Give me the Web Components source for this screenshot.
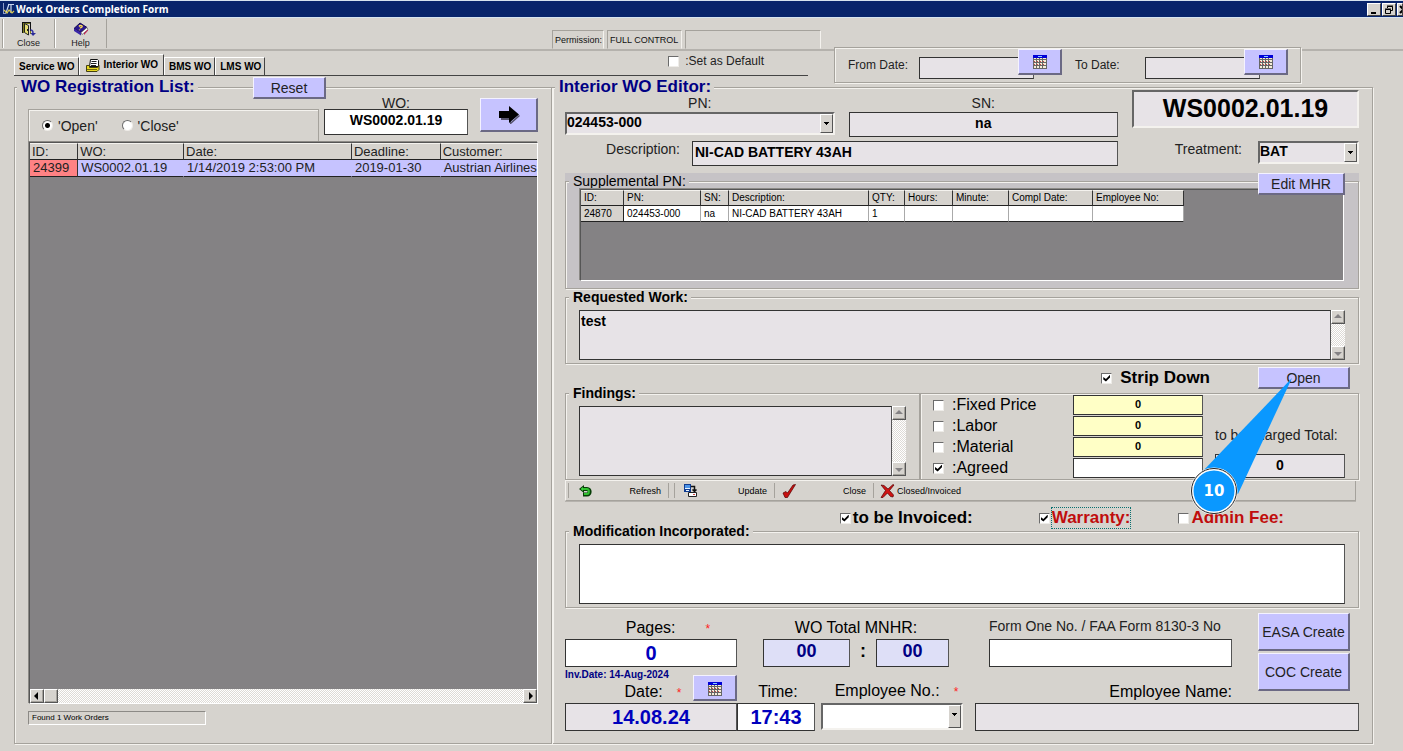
<!DOCTYPE html>
<html lang="en">
<head>
<meta charset="utf-8">
<title>Work Orders Completion Form</title>
<style>
  html, body { margin: 0; background: #d6d3ce; }
  body { font-family: "Liberation Sans", Arial, sans-serif; font-size: 14px; color: #222; }
</style>
</head>
<body>
<wo-app></wo-app>
<script>
const base = `
  *, *::before, *::after { box-sizing: border-box; }
  :host { display: block; min-width: 0; }
  button, input, select, textarea { font: inherit; color: inherit; margin: 0; border-radius: 0; outline: 0; min-width: 0; }
  button { padding: 0; }
  .face { background: #c6c3ff; border: solid; border-width: 1px 2px 2px 1px; border-color: #f4f2ff #6b6984 #6b6984 #f4f2ff; color: #222; line-height: 16px; }
  .field { display: block; width: 100%; border: 1px solid #333; border-right-color: #555; background: #e7e3e7; color: #000; padding: 0 2px; font-weight: bold; text-align: center; }
  .left { text-align: left; }
  .white { background: #fff; }
  .area { resize: none; overflow: hidden; text-align: left; line-height: 18px; padding: 1px; }
  .combo { display: block; position: relative; background: #e7e3e7; border: 2px solid; border-color: #666 #f4f2ee #f4f2ee #666; }
  .combo select { display: block; appearance: none; width: 100%; height: 19px; border: 0; background: none; color: #000; font-weight: bold; padding: 0 0 3px; }
  .combo::after { content: ""; position: absolute; right: 0; top: 0; bottom: 0; width: 13px; pointer-events: none; border: 1px solid; border-color: #fff #555 #555 #fff;
    background: linear-gradient(#000 0 0) 3px 7px / 5px 1px no-repeat, linear-gradient(#000 0 0) 4px 8px / 3px 1px no-repeat, linear-gradient(#000 0 0) 5px 9px / 1px 1px no-repeat, #d6d3ce; }
  .tick { display: inline-flex; align-items: center; white-space: nowrap; }
  input[type=checkbox] { appearance: none; width: 11px; height: 11px; flex: none; position: relative; background: #fff; border: 1px solid; border-color: #6b6b6b #eeece8 #eeece8 #6b6b6b; }
  input[type=checkbox]:checked::after { content: ""; position: absolute; inset: 1px; background: #000; clip-path: polygon(0 35%, 38% 65%, 100% 0, 100% 40%, 38% 100%, 0 70%); }
  input[type=radio] { appearance: none; width: 11px; height: 11px; flex: none; border-radius: 50%; background: #fff; border: 1px solid; border-color: #6b6b6b #eeece8 #eeece8 #6b6b6b; }
  input[type=radio]:checked { background: radial-gradient(circle, #000 0 2px, #fff 3px); }
  table { border-collapse: separate; border-spacing: 0; table-layout: fixed; text-align: left; }
  th, td { font-weight: normal; white-space: nowrap; overflow: hidden; padding: 0 0 0 3px; border-right: 1px solid #333; border-bottom: 1px solid #222; }
  th { background: #d6d3ce; border-top: 1px solid #f4f2ee; }
  .frame { background: #848284; border: 1px solid; border-color: #555 #fff #fff #555; box-shadow: -1px -1px 0 #8c8a86; }
`;
function component(name, css, html) {
  customElements.define(name, class extends HTMLElement {
    constructor() {
      super();
      this.attachShadow({ mode: 'open' }).innerHTML = `<style>${base}${css}</style>${html}`;
    }
  });
}

const glyphs = {
  calendar: [14, 14, `<path fill="#f4ecd8" d="M0 0h14v14H0z"/><path stroke="#666" d="M0 4.500h14M0 7.500h14M0 10.500h14M0 13.500h14M.5 3v11M3.500 3v11M6.500 3v11M9.500 3v11M13.500 3v11"/><path stroke="#c44" stroke-dasharray="1 2" d="M1 6.500h12M1 9.500h12"/><path fill="#0000d8" d="M0 0h14v3H0z"/><path fill="#8cf" d="M5 1h4v1H5z"/>`],
  door: [14, 14, `<path fill="#7a7a20" d="M1 1h8v11H8V2H2v9H1z"/><path fill="#111" d="M0 0h9v1H1v10H0zM8 1h1v8H8z"/><path fill="#e4dc70" stroke="#222" d="M2.500 1.500l4 2v9.500l-4-2.500z"/><path fill="#222" d="M5 7h1v2H5z"/><path fill="none" stroke="#3a3aa8" stroke-width="1.500" d="M8.500 8c2 0 2.500 1 2.500 3"/><path fill="#2a2a98" d="M8.500 11H14l-3 3z"/>`],
  book: [16, 14, `<path fill="#2a1690" stroke="#150a50" d="M1 6.500L7 1l7 4.500-6 5z"/><path fill="#fff" stroke="#444" stroke-width=".6" d="M8 10.500l6-5 1 2-6 5z"/><path fill="#3a26a8" d="M1 6.500l7 4v3L1 9z"/><path fill="#c02050" d="M11 11l4-3.500v1L11 13z"/><path fill="none" stroke="#ffe050" stroke-width="1.400" d="M6 4.500c1-1.500 4-1 3 .4-.6.800-1.600.6-2 1.400M6.500 7.500v.8"/>`],
  printer: [15, 13, `<path fill="#fff" stroke="#111" d="M5.500.5h7l1 1v6h-9z"/><path stroke="#222" d="M6.500 2.500h5M6 4.500h5.500M6 6.500h5"/><path fill="#e8d820" stroke="#444010" d="M1.500 6.500h3v2h8l1.500-2v4l-2 2H1.500z"/><path stroke="#756c10" d="M2 10.500h10"/>`],
  logo: [13, 14, `<path fill="#8c9cc8" d="M1 1h1v10h2v1H1z"/><path fill="none" stroke="#c8d8f0" stroke-width="1.200" d="M4 11l3-9M6 2.500h6M9 3v8"/><path fill="none" stroke="#d8c850" stroke-width="1.200" d="M2 8l3 3 2-3 3 3 2-2"/>`],
  arrow: [22, 18, `<path fill="#55536b" d="M2 6h1v8h9v4l1 0 9-8-1-1-8 7v-4H3z"/><path fill="#000" d="M1 5h10V0l10 8.500-10 8.500v-5H1z"/>`],
  undo: [13, 12, `<path fill="none" stroke="#063d06" stroke-width="4" d="M3 4h5c3.500 0 3.500 5.500 0 5.500H4"/><path fill="#063d06" d="M0 4l5-4v8z"/><path fill="none" stroke="#30c030" stroke-width="2" d="M3 4h5c2.500 0 2.500 5 0 5H5"/><path fill="#40d840" d="M1.500 4L4 2v4z"/>`],
  update: [14, 13, `<path fill="#103c90" d="M0 0h7v8H0z"/><path fill="#4c94e8" d="M1 1h5v3H1z"/><path fill="#e8f4ff" d="M1 4h5v1H1zM2 6h3v1H2z"/><path fill="none" stroke="#111" stroke-width="1.500" d="M7 2.500h3.500V7M8.500 5.500l2 2 2-2"/><path fill="#fff" stroke="#222" d="M4.500 8.500h8v4h-8z"/><path fill="#c44" d="M9 10h2v1H9z"/>`],
  check: [14, 14, `<path fill="#c81010" stroke="#500" stroke-width=".7" d="M1 9l3-1.500 1.500 1.500L11 1l2.500-.5L7 11l-1.500 2.500H3z"/>`],
  cross: [15, 14, `<path fill="#d01414" stroke="#500" stroke-width=".7" d="M1 1l3 .5 4 3.500L13 .5l1 .5-4.500 5.500 4 4.500-.5 2-2.500-.5L7.500 9 3 13.500H1l4.500-7z"/>`]
};
customElements.define('wo-icon', class extends HTMLElement {
  constructor() {
    super();
    const [w, h, body] = glyphs[this.getAttribute('name')];
    this.attachShadow({ mode: 'open' }).innerHTML =
      `<style>:host{display:inline-block;line-height:0;flex:none;vertical-align:middle}svg{display:block}</style>
       <svg width="${w}" height="${h}" viewBox="0 0 ${w} ${h}" aria-hidden="true">${body}</svg>`;
  }
});

component('group-box', `
  :host { display: grid; --legend: 16px; }
  fieldset { margin: 0; padding: 0; min-width: 0; border: 1px solid #a5a29c; box-shadow: 1px 1px 0 #f4f2ee, inset 1px 1px 0 #f4f2ee; display: flex; flex-direction: column; }
  legend { padding: 0 3px 0 4px; margin-left: 3px; line-height: var(--legend); background: var(--bg, #d6d3ce); white-space: nowrap; color: #000; }
  :host([heading]) { --legend: 20px; }
  :host([heading]) legend { font-size: 17px; font-weight: bold; color: #000084; margin-left: 2px; }
  :host([strong]) legend { font-weight: bold; }
`, `<fieldset><legend><slot name="legend"></slot></legend><slot></slot></fieldset>`);

component('scroll-bar', `
  :host { display: flex; background: repeating-conic-gradient(#fff 0 25%, #dedbd6 0 50%) 0 0 / 2px 2px; }
  :host([vertical]) { flex-direction: column; justify-content: space-between; width: 14px; flex: none; }
  :host([horizontal]) { height: 14px; }
  button, i { display: grid; place-items: center; width: 14px; height: 14px; background: #d6d3ce; border: 1px solid; border-color: #fff #555 #555 #fff; box-shadow: inset -1px -1px 0 #a5a29c; flex: none; }
  svg { display: block; fill: #848284; }
  :host([horizontal]) svg { fill: #000; }
  :host([horizontal]) button:last-child { margin-left: auto; }
  :host([vertical]) i { display: none; }
  :host([vertical]) svg { transform: rotate(90deg); }
`, `<button aria-label="Back"><svg width="8" height="8"><path d="M5 0v8L1 4z"/></svg></button><i></i>
    <button aria-label="Forward"><svg width="8" height="8"><path d="M3 0v8l4-4z"/></svg></button>`);

component('title-bar', `
  :host { display: flex; align-items: center; height: 18px; padding: 0 0 0 2px; background: #08246b; border: solid #d6e3ef; border-width: 1px 0; color: #fff; overflow: hidden; }
  h1 { margin: 0 auto 0 1px; font: bold 10px/16px "Open Sans", "Noto Sans", sans-serif; white-space: nowrap; }
  button { width: 14px; height: 13px; margin-left: 1px; background: #d6d3ce; border: 1px solid; border-color: #fff #444 #444 #fff; flex: none; line-height: 0; }
  .last { width: 6px; overflow: hidden; }
  svg { display: block; margin: 1px; fill: none; stroke: #000; }
`, `<wo-icon name="logo"></wo-icon><h1>Work Orders Completion Form</h1>
   <button aria-label="Minimize"><svg width="10" height="9"><path stroke-width="2" d="M2 8h5"/></svg></button>
   <button aria-label="Restore"><svg width="10" height="9"><path d="M3.500 3V1.500h5v4H7M3 1h6M1.500 4.500h5v4h-5zM1 4h6"/></svg></button>
   <button class="last" aria-label="Close"><svg width="8" height="9"><path stroke-width="2" d="M1 1l7 7M8 1L1 8"/></svg></button>`);

component('tool-bar', `
  :host { display: grid; grid-template-columns: 552fr 851fr; height: 33px; border-bottom: 2px solid #b5b2ad; font-size: 9px; }
  .tools { display: flex; padding: 1px 0 1px 2px; }
  .tools button { width: 52px; border: 0; border-left: 1px solid #a5a29c; box-shadow: inset 1px 0 0 #fff; background: none; display: flex; flex-direction: column; align-items: center; gap: 2px; padding-top: 3px; line-height: 10px; }
  .tools button:last-child { width: 53px; border-right: 1px solid #a5a29c; }
  .status { display: grid; grid-template-columns: 52px 75px 136px; gap: 3px; align-items: end; }
  .status span { height: 19px; line-height: 18px; padding-left: 2px; border: 1px solid; border-color: #a5a29c #f4f2ee transparent #a5a29c; white-space: nowrap; color: #111; }
`, `<div class="tools"><button><wo-icon name="door"></wo-icon>Close</button><button><wo-icon name="book"></wo-icon>Help</button></div>
   <div class="status"><span>Permission:</span><span>FULL CONTROL</span><span></span></div>`);

component('tab-strip', `
  :host { display: flex; align-items: flex-end; padding-left: 14px; height: 25px; }
  .row { flex: 1; display: flex; align-items: flex-end; box-shadow: inset 0 -1px 0 #444; padding-bottom: 1px; }
  nav { display: flex; align-items: flex-end; }
  a { display: flex; align-items: center; gap: 4px; height: 18px; padding: 0 3px 0 4px; font: bold 10px/16px "Liberation Sans", sans-serif; color: #000; text-decoration: none; white-space: nowrap; border: 1px solid; border-color: #fff #444 transparent #fff; border-bottom: 0; }
  a.on { height: 21px; padding: 0 5px; }
  .tick { font-size: 12px; line-height: 20px; gap: 6px; margin: 0 44px 4px auto; }
`, `<div class="row"><nav><a href="#service">Service WO</a><a class="on" href="#interior"><wo-icon name="printer"></wo-icon>Interior WO</a><a href="#bms">BMS WO</a><a href="#lms">LMS WO</a></nav>
   <label class="tick"><input type="checkbox">:Set as Default</label></div>`);

component('date-range', `
  :host { display: flex; align-items: center; height: 36px; padding: 0 12px 0 13px; background: #d6d3ce; border: 1px solid #a5a29c; box-shadow: 1px 1px 0 #f4f2ee, inset 1px 1px 0 #f4f2ee; font-size: 12px; }
  label { width: 71px; white-space: nowrap; }
  label.to { width: 70px; margin-left: 13px; }
  .pick { display: grid; grid-template-columns: 99px 16px 28px; grid-template-rows: 26px; align-items: end; flex: none; margin-bottom: 6px; }
  .pick input { grid-area: 1 / 1 / 2 / 3; height: 22px; margin-bottom: -4px; }
  .pick button { grid-area: 1 / 2 / 2 / 4; height: 26px; }
`, `<label for="from">From Date:</label><div class="pick"><input class="field" id="from"><button class="face" aria-label="Pick start date"><wo-icon name="calendar"></wo-icon></button></div>
   <label class="to" for="to">To Date:</label><div class="pick"><input class="field" id="to"><button class="face" aria-label="Pick end date"><wo-icon name="calendar"></wo-icon></button></div>`);

component('order-list', `
  :host { display: grid; position: relative; }
  .reset { position: absolute; right: 226px; top: 0; width: 73px; height: 22px; }
  .body { flex: 1; display: flex; flex-direction: column; padding: 0 13px 18px; }
  .filter { display: grid; grid-template-columns: 1fr 161px 58px; height: 45px; }
  .state { display: flex; align-items: center; gap: 24px; margin-top: 12px; padding-left: 13px; border: 1px solid #a5a29c; box-shadow: inset 1px 1px 0 #f4f2ee; }
  .state label { gap: 5px; }
  .find { margin: 0 12px 0 5px; text-align: center; }
  .find label { display: block; line-height: 12px; }
  .find input { height: 26px; padding-bottom: 5px; }
  .go { height: 34px; margin-top: 1px; }
  .frame { flex: 1; display: flex; flex-direction: column; margin-left: 1px; }
  table { width: 100%; font-size: 13px; }
  th { height: 17px; line-height: 15px; padding-left: 2px; }
  td { height: 17px; line-height: 16px; background: #c6c3ff; border-right-color: #c6c3ff; }
  td:first-child { background: #ff8284; border-right-color: #333; }
  th:last-child, td:last-child { border-right: 0; }
  scroll-bar { margin-top: auto; }
  .found { width: 178px; margin: 7px 0 0; padding-left: 3px; font-size: 8px; line-height: 12px; border: 1px solid; border-color: #8c8a86 #fff #fff #8c8a86; color: #000; }
`, `<group-box heading><span slot="legend">WO Registration List:</span>
   <div class="body">
     <div class="filter">
       <div class="state"><label class="tick"><input type="radio" name="state" checked>'Open'</label><label class="tick"><input type="radio" name="state">'Close'</label></div>
       <div class="find"><label for="wo">WO:</label><input class="field white" id="wo" value="WS0002.01.19"></div>
       <button class="face go" aria-label="Go"><wo-icon name="arrow"></wo-icon></button>
     </div>
     <div class="frame">
       <table><colgroup><col style="width:9.5%"><col style="width:20.9%"><col style="width:33.1%"><col style="width:17.5%"><col style="width:19%"></colgroup>
         <thead><tr><th>ID:</th><th>WO:</th><th>Date:</th><th>Deadline:</th><th>Customer:</th></tr></thead>
         <tbody><tr><td>24399</td><td>WS0002.01.19</td><td>1/14/2019 2:53:00 PM</td><td>2019-01-30</td><td>Austrian Airlines</td></tr></tbody></table>
       <scroll-bar horizontal></scroll-bar>
     </div>
     <p class="found">Found 1 Work Orders</p>
   </div></group-box><button class="face reset">Reset</button>`);

component('order-header', `
  :host { display: grid; grid-template-columns: 1fr 227px; column-gap: 14px; height: 69px; }
  .main { display: grid; grid-template-columns: 1fr 1fr; grid-template-rows: 12px 25px 25px; column-gap: 14px; row-gap: 3px; }
  .main > label { text-align: center; line-height: 12px; }
  .main .combo { height: 23px; }
  .desc { grid-column: 1 / 3; display: grid; grid-template-columns: 115px 1fr; column-gap: 12px; margin-top: 1px; }
  .desc label, .treat label { text-align: right; line-height: 16px; }
  .field { height: 25px; padding-bottom: 4px; }
  .side { display: flex; flex-direction: column; justify-content: space-between; margin-top: -7px; }
  .number { height: 38px; line-height: 32px; font-size: 25px; font-weight: bold; text-align: center; color: #000; background: #e7e3e7; border: 2px solid; border-color: #666 #f4f2ee #f4f2ee #666; }
  .treat { display: grid; grid-template-columns: 1fr 101px; column-gap: 16px; margin-bottom: 2px; }
`, `<div class="main"><label for="pn">PN:</label><label for="sn">SN:</label>
     <span class="combo"><select id="pn"><option>024453-000</option></select></span><input class="field" id="sn" value="na">
     <div class="desc"><label for="desc">Description:</label><input class="field left" id="desc" value="NI-CAD BATTERY 43AH"></div></div>
   <div class="side"><output class="number">WS0002.01.19</output>
     <div class="treat"><label for="treat">Treatment:</label><span class="combo"><select id="treat"><option>BAT</option></select></span></div></div>`);

component('supplemental-parts', `
  :host { display: grid; position: relative; background: #c6c3c6; --bg: #c6c3c6; }
  .frame { height: 92px; margin: 0 14px 7px; overflow: auto; }
  table { width: 603px; font-size: 10px; color: #000; }
  th { height: 16px; line-height: 14px; }
  td { height: 16px; line-height: 15px; background: #fff; border-right-color: #aaa; }
  td:first-child { background: #d6d3ce; border-right-color: #222; }
  button { position: absolute; right: 14px; top: 0; width: 87px; height: 22px; }
`, `<group-box><span slot="legend">Supplemental PN:</span><div class="frame"><table>
     <colgroup><col style="width:43px"><col style="width:77px"><col style="width:28px"><col style="width:140px"><col style="width:36px"><col style="width:48px"><col style="width:56px"><col style="width:84px"><col style="width:91px"></colgroup>
     <thead><tr><th>ID:</th><th>PN:</th><th>SN:</th><th>Description:</th><th>QTY:</th><th>Hours:</th><th>Minute:</th><th>Compl Date:</th><th>Employee No:</th></tr></thead>
     <tbody><tr><td>24870</td><td>024453-000</td><td>na</td><td>NI-CAD BATTERY 43AH</td><td>1</td><td></td><td></td><td></td><td></td></tr></tbody></table></div></group-box>
   <button class="face">Edit MHR</button>`);

customElements.define('memo-group', class extends HTMLElement {
  constructor() {
    super();
    const title = this.getAttribute('title-text');
    this.attachShadow({ mode: 'open' }).innerHTML = `<style>${base}
      .wrap { display: flex; padding: 5px 13px 3px; }
      .area { flex: 1; height: var(--memo, 50px); background: var(--paper, #e7e3e7); }
      :host([plain]) scroll-bar { display: none; }
      </style><group-box strong><label slot="legend" for="memo">${title}</label>
      <div class="wrap"><textarea class="field area" id="memo">${this.getAttribute('value') || ''}</textarea><scroll-bar vertical></scroll-bar></div></group-box>`;
  }
});

component('step-callout', `
  :host { position: absolute; right: 63px; top: 9px; width: 106px; height: 141px; z-index: 2; pointer-events: none; }
  svg { display: block; }
  text { font: bold 15px "DejaVu Sans", sans-serif; fill: #fff; text-anchor: middle; }
`, `<svg width="106" height="141" viewBox="0 0 106 141"><path fill="#0a98ff" d="M102 2L12 96l36 22z"/>
   <circle cx="24" cy="115" r="22" fill="#0a98ff" stroke="#fff" stroke-width="3"/><circle cx="24" cy="115" r="22.500" fill="none" stroke="#222" stroke-width="1"/>
   <text x="24" y="120">10</text></svg>`);

component('strip-row', `
  :host { display: flex; justify-content: flex-end; align-items: center; position: relative; height: 22px; margin-top: 3px; }
  .tick { gap: 8px; font: bold 17px/20px "Liberation Sans", sans-serif; color: #000; margin-right: 48px; }
  button { width: 92px; height: 22px; margin-right: 9px; }
`, `<label class="tick"><input type="checkbox" checked>Strip Down</label><button class="face">Open</button><step-callout></step-callout>`);

component('charge-panel', `
  :host { display: grid; grid-template-columns: 1fr 130px 130px; column-gap: 12px; margin-top: 8px; padding: 1px 13px 1px 12px; border: 1px solid #a5a29c; box-shadow: 1px 1px 0 #f4f2ee, inset 1px 1px 0 #f4f2ee; }
  .ticks, .sums { display: grid; grid-template-rows: repeat(4, 20px); row-gap: 1px; }
  .tick { gap: 8px; font-size: 16px; color: #000; }
  .sums .field { height: 20px; font-size: 11px; background: #ffffc6; padding-bottom: 2px; }
  .sums .white { background: #fff; }
  .total { align-self: end; white-space: nowrap; }
  .total label { display: block; line-height: 16px; margin-bottom: 11px; }
  .total .field { height: 24px; padding-bottom: 3px; }
`, `<div class="ticks"><label class="tick"><input type="checkbox">:Fixed Price</label><label class="tick"><input type="checkbox">:Labor</label><label class="tick"><input type="checkbox">:Material</label><label class="tick"><input type="checkbox" checked>:Agreed</label></div>
   <div class="sums"><input class="field" aria-label="Fixed price" value="0"><input class="field" aria-label="Labor" value="0"><input class="field" aria-label="Material" value="0"><input class="field white" aria-label="Agreed"></div>
   <div class="total"><label for="total">to be charged Total:</label><input class="field" id="total" value="0"></div>`);

component('action-bar', `
  :host { display: flex; align-items: stretch; height: 21px; margin-right: 3px; padding: 2px; border: 1px solid; border-color: #f4f2ee #a5a29c #a5a29c #f4f2ee; box-shadow: 0 1px 0 #b5b2ad; font-size: 9px; color: #000; }
  button { display: flex; align-items: center; justify-content: space-between; width: 99px; padding: 0 7px 0 7px; background: none; border: 0; border-right: 1px solid #a5a29c; }
  .first { width: 101px; padding-left: 10px; border-left: 1px solid #a5a29c; margin-right: 5px; }
  .second { border-left: 1px solid #a5a29c; padding-left: 9px; width: 101px; }
  .wide { border: 0; justify-content: flex-start; gap: 2px; padding-left: 6px; width: 110px; white-space: nowrap; }
`, `<button class="first"><wo-icon name="undo"></wo-icon>Refresh</button><button class="second"><wo-icon name="update"></wo-icon>Update</button><button><wo-icon name="check"></wo-icon>Close</button><button class="wide"><wo-icon name="cross"></wo-icon>Closed/Invoiced</button>`);

component('invoice-flags', `
  :host { display: flex; justify-content: flex-end; height: 22px; margin: 6px 75px -6px 0; font: bold 17px/20px "Liberation Sans", sans-serif; color: #000; position: relative; }
  .tick { gap: 2px; }
  .invoiced { margin-right: 66px; }
  .warranty { margin-right: 48px; }
  .warranty, .fee { color: #c00d0d; }
  .focus { outline: 1px dotted #087070; }
`, `<label class="tick invoiced"><input type="checkbox" checked>to be Invoiced:</label><label class="tick warranty"><input type="checkbox" checked><span class="focus">Warranty:</span></label><label class="tick fee"><input type="checkbox">Admin Fee:</label>`);

component('completion-form', `
  :host { display: block; padding-top: 4px; }
  .top { display: grid; grid-template-columns: 1fr 92px; column-gap: 26px; padding-right: 9px; }
  .totals { display: grid; grid-template-columns: 172px 26px 87px 26px 73px 40px 1fr; grid-template-rows: 18px 28px; row-gap: 2px; padding-top: 7px; }
  .totals label, .totals .mnhr, .heads label { text-align: center; font-size: 16px; line-height: 18px; color: #000; white-space: nowrap; }
  .totals .pages { padding-left: 34px; }
  .totals .mnhr { grid-column: 3 / 6; }
  .totals .form { grid-column: 7; font-size: 14px; line-height: 14px; text-align: left; color: #222; }
  .totals .field { grid-row: 2; height: 28px; }
  .blue { color: #0000bd; font-size: 20px; }
  .pale { background: #dedff7; color: #000084; font-size: 18px; padding-bottom: 3px; }
  .colon { grid-area: 2 / 4; text-align: center; font: bold 18px/24px "Liberation Sans", sans-serif; color: #000; }
  .star { color: #f22; font-size: 12px; margin-left: 30px; }
  .near { margin-left: 14px; }
  .heads { display: grid; grid-template-columns: 172px 82px 155px 1fr; height: 36px; align-items: end; padding-bottom: 2px; }
  .date { display: grid; grid-template-columns: 1fr 44px; grid-template-rows: 12px 20px; }
  .date p { margin: 0; font-size: 10px; font-weight: bold; line-height: 12px; color: #000084; white-space: nowrap; }
  .date button { grid-area: 1 / 2 / 3 / 3; height: 26px; align-self: end; }
  .date label { padding-left: 48px; line-height: 22px; }
  .heads .name { text-align: right; }
  .values { display: grid; grid-template-columns: 172px 78px 142px 1fr; }
  .values .field { height: 28px; }
  .values .combo { margin-left: 6px; width: 142px; height: 27px; background: #fff; }
  .values .combo select { height: 23px; }
  .values .who { grid-column: 4; width: auto; margin-left: 18px; }
  .make { display: grid; grid-template-rows: 38px 38px; row-gap: 2px; padding-top: 1px; white-space: nowrap; }
  .c1 { grid-column: 1; } .c3 { grid-column: 3; } .c5 { grid-column: 5; } .c7 { grid-column: 7; }
`, `<div class="top"><div>
     <div class="totals"><label class="pages" for="pages">Pages:<span class="star">*</span></label><span class="mnhr">WO Total MNHR:</span><label class="form" for="form1">Form One No. / FAA Form 8130-3 No</label>
       <input class="field white blue c1" id="pages" value="0"><input class="field pale c3" aria-label="Hours" value="00"><span class="colon">:</span><input class="field pale c5" aria-label="Minutes" value="00"><input class="field white c7" id="form1"></div>
     <div class="heads"><div class="date"><p>Inv.Date: 14-Aug-2024</p><label for="date">Date:<span class="star near">*</span></label><button class="face" aria-label="Pick date"><wo-icon name="calendar"></wo-icon></button></div>
       <label for="time">Time:</label><label for="emp">Employee No.:<span class="star near">*</span></label><label class="name" for="name">Employee Name:</label></div>
   </div><div class="make"><button class="face">EASA Create</button><button class="face">COC Create</button></div></div>
   <div class="values"><input class="field blue" id="date" value="14.08.24"><input class="field white blue" id="time" value="17:43"><span class="combo"><select id="emp"><option></option></select></span><input class="field who" id="name"></div>`);

component('order-editor', `
  :host { display: grid; }
  .body { padding: 0 13px 12px 12px; }
  supplemental-parts { margin-top: 7px; }
  .cost { display: grid; grid-template-columns: 1fr 439px; margin-top: -4px; }
  .findings { --memo: 70px; }
  .modification { --memo: 60px; --paper: #fff; }
`, `<group-box heading><span slot="legend">Interior WO Editor:</span><div class="body">
     <order-header></order-header>
     <supplemental-parts></supplemental-parts>
     <memo-group title-text="Requested Work:" value="test"></memo-group>
     <strip-row></strip-row>
     <div class="cost"><memo-group class="findings" title-text="Findings:"></memo-group><charge-panel></charge-panel></div>
     <action-bar></action-bar>
     <invoice-flags></invoice-flags>
     <memo-group class="modification" plain title-text="Modification Incorporated:"></memo-group>
     <completion-form></completion-form>
   </div></group-box>`);

component('wo-app', `
  :host { display: flex; flex-direction: column; min-height: 100vh; }
  header { display: grid; grid-template-columns: minmax(0, 1fr) 467px 102px; column-gap: 0; }
  tool-bar { grid-area: 1 / 1 / 2 / 4; }
  tab-strip { grid-area: 2 / 1 / 3 / 2; margin-right: 26px; margin-bottom: 1px; }
  date-range { grid-area: 1 / 2 / 3 / 3; align-self: end; margin-bottom: -6px; position: relative; z-index: 1; }
  main { flex: 1; display: grid; grid-template-columns: 538fr 821fr; padding: 0 30px 7px 14px; }
`, `<title-bar></title-bar>
   <header><tool-bar></tool-bar><tab-strip></tab-strip><date-range></date-range></header>
   <main><order-list></order-list><order-editor></order-editor></main>`);
</script>
</body>
</html>
